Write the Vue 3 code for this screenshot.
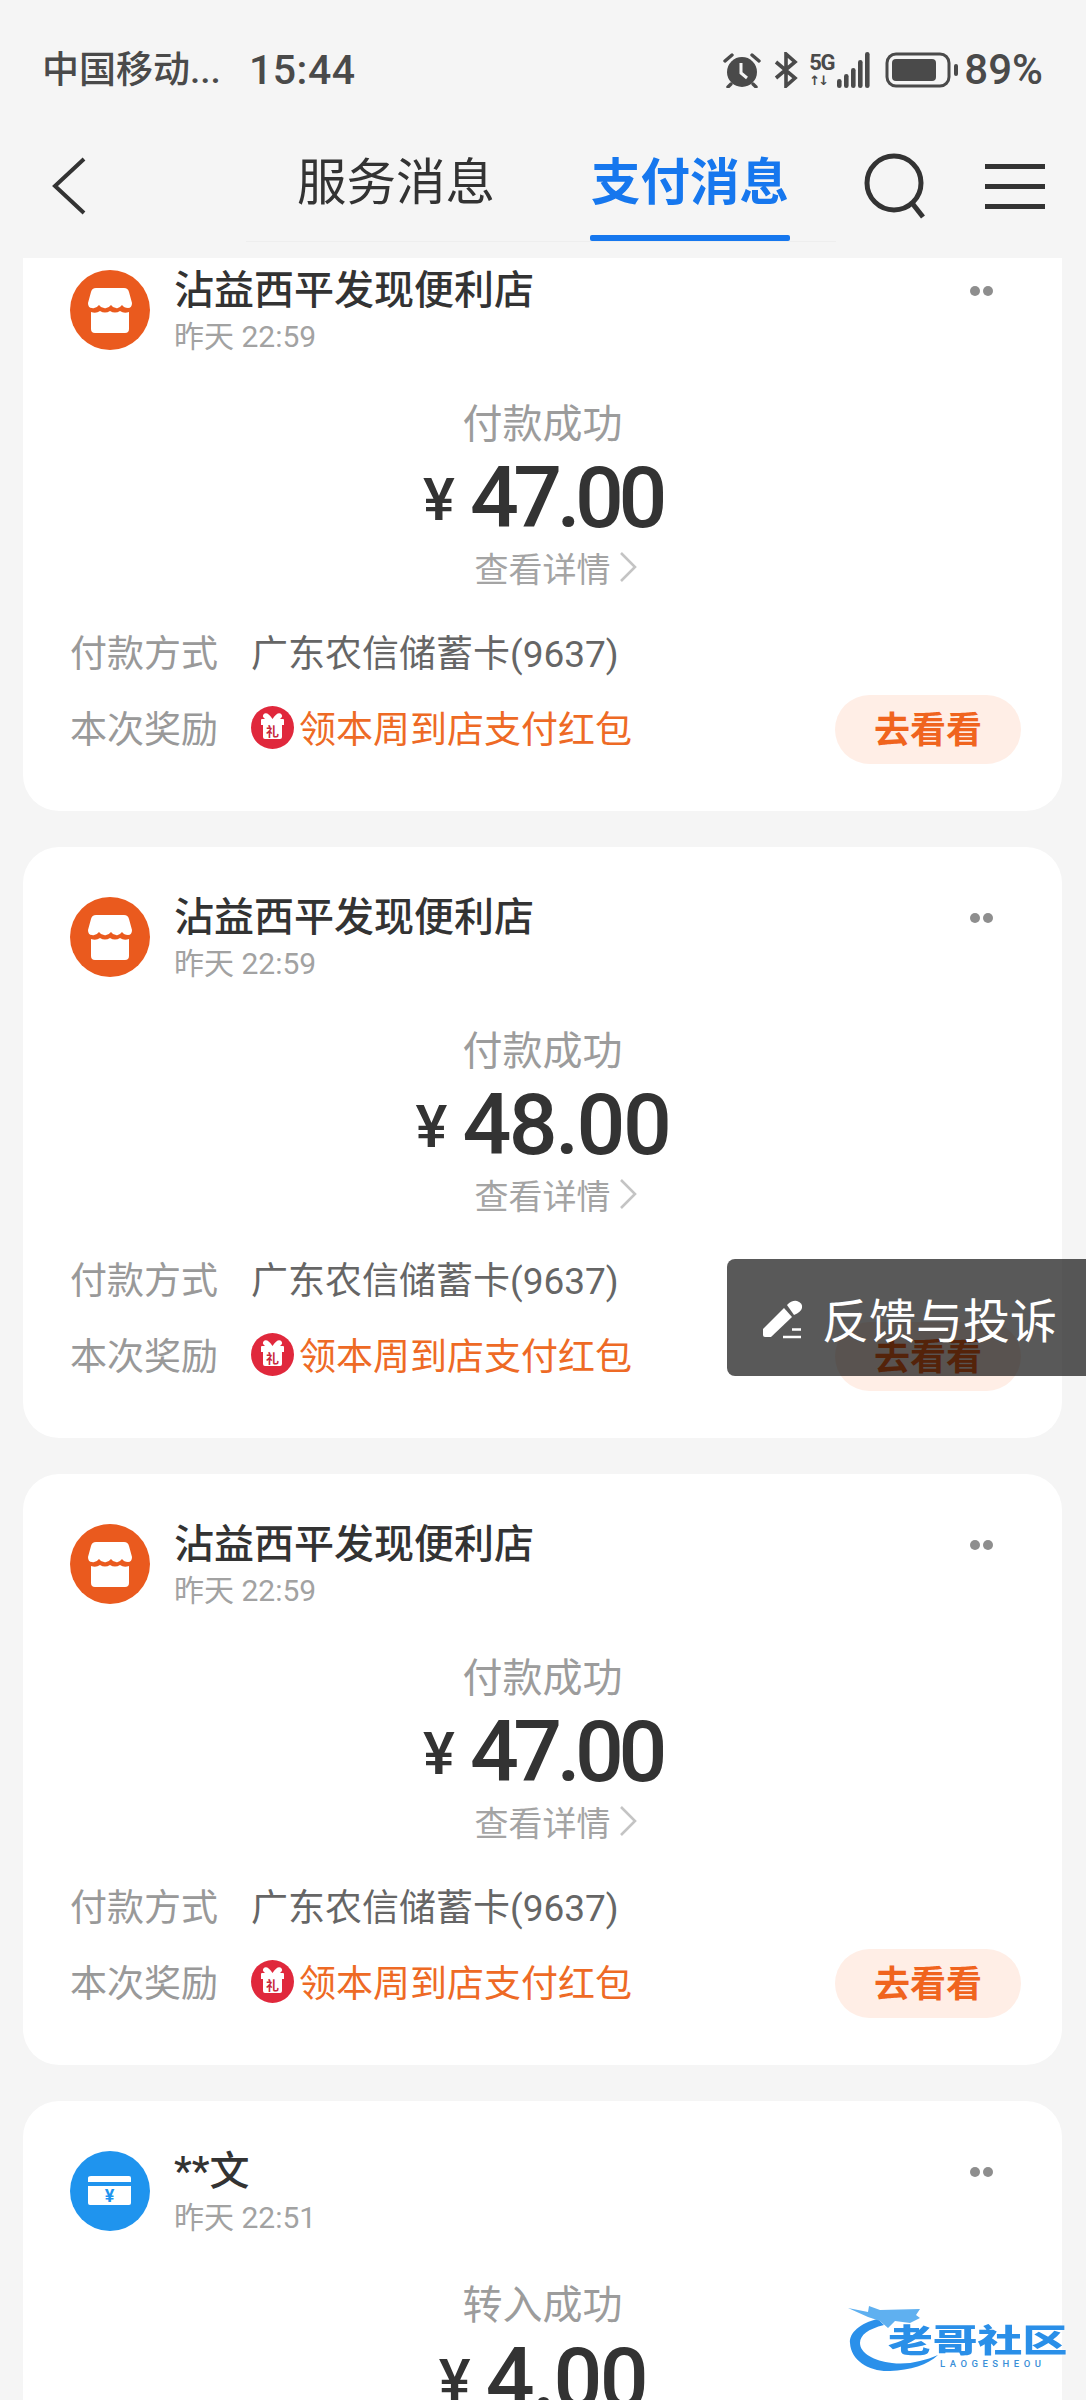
<script setup>
const cards = [
  { id: 1, type: 'shop', name: '沾益西平发现便利店', time: '昨天 22:59', status: '付款成功', amount: '47.00', track: -5.5 },
  { id: 2, type: 'shop', name: '沾益西平发现便利店', time: '昨天 22:59', status: '付款成功', amount: '48.00', track: -2.5 },
  { id: 3, type: 'shop', name: '沾益西平发现便利店', time: '昨天 22:59', status: '付款成功', amount: '47.00', track: -5.5 },
  { id: 4, type: 'bank', name: '**文', time: '昨天 22:51', status: '转入成功', amount: '4.00', track: -2.5 },
]
const bars = [
  { x: 0, h: 9 }, { x: 7, h: 14 }, { x: 14, h: 20 }, { x: 21, h: 28 }, { x: 28, h: 36 },
]
</script>

<template>
  <div class="page">
    <header class="top">
      <div class="status">
        <span class="carrier">中国移动...</span>
        <span class="clock">15:44</span>
        <div class="status-right">
          <svg class="alarm" width="38" height="36" viewBox="0 0 38 36">
            <circle cx="19" cy="20" r="15" fill="#4a4a4a" />
            <path d="M2 9 L9 3 M36 9 L29 3 M8 32 L5 35 M30 32 L33 35" stroke="#4a4a4a" stroke-width="3.4" stroke-linecap="round" />
            <path d="M18 11 V21 L24 26" fill="none" stroke="#f5f5f5" stroke-width="3" />
          </svg>
          <svg class="bt" width="26" height="36" viewBox="0 0 26 36">
            <path d="M3 10 L22 26 L13 34 V2 L22 10 L3 26" fill="none" stroke="#4a4a4a" stroke-width="3.6" />
          </svg>
          <div class="net">
            <span class="five">5G</span>
            <span class="arrows">↑↓</span>
          </div>
          <svg class="signal" width="33" height="36" viewBox="0 0 33 36">
            <rect v-for="b in bars" :key="b.x" :x="b.x" :y="36 - b.h" width="4.6" :height="b.h" rx="2.3" fill="#4a4a4a" />
          </svg>
          <svg class="battery" width="74" height="36" viewBox="0 0 74 36">
            <rect x="2" y="2" width="62" height="32" rx="9" fill="none" stroke="#4a4a4a" stroke-width="3" />
            <rect x="7" y="7" width="44" height="22" rx="4" fill="#4a4a4a" />
            <rect x="69" y="12" width="4" height="12" rx="2" fill="#4a4a4a" />
          </svg>
          <span class="pct">89%</span>
        </div>
      </div>
      <nav class="nav">
        <svg class="back" width="36" height="58" viewBox="0 0 36 58">
          <path d="M33 2 L4 29 L33 56" fill="none" stroke="#333" stroke-width="4" />
        </svg>
        <div class="tabs">
          <span class="tab">服务消息</span>
          <span class="tab active">支付消息</span>
        </div>
        <svg class="search" width="66" height="66" viewBox="0 0 66 66">
          <circle cx="31" cy="30" r="27" fill="none" stroke="#333" stroke-width="5" />
          <path d="M49 50 L60 64" stroke="#333" stroke-width="5" />
        </svg>
        <div class="menu"><i></i><i></i><i></i></div>
      </nav>
      <div class="tab-line"></div>
    </header>

    <main class="viewport">
      <div class="list">
        <article v-for="c in cards" :key="c.id" class="card">
          <div class="head">
            <svg v-if="c.type === 'shop'" class="avatar" width="80" height="80" viewBox="0 0 80 80">
              <circle cx="40" cy="40" r="40" fill="#ea5a1e" />
              <path d="M26 18 H54 Q58 18 59 22 L62 33 Q62 38 58 38 Q54 38 52 35 Q49 39 46 38 Q43 38 41 35 Q38 39 34 38 Q31 38 29 35 Q26 39 22 38 Q18 38 18 33 L21 22 Q22 18 26 18 Z" fill="#fff" />
              <path d="M21 42 Q26 44 30 41 Q35 44 40 41 Q45 44 50 41 Q54 44 59 42 V59 Q59 63 55 63 H25 Q21 63 21 59 Z" fill="#fff" />
            </svg>
            <svg v-else class="avatar" width="80" height="80" viewBox="0 0 80 80">
              <circle cx="40" cy="40" r="40" fill="#1f94ee" />
              <path d="M21 25 H59 Q61 25 61 27 V31 H18 V27 Q18 25 21 25 Z" fill="#fff" />
              <path d="M18 35 H61 V52 Q61 54 59 54 H20 Q18 54 18 52 Z" fill="#fff" />
              <text x="39.5" y="51" text-anchor="middle" font-size="18" font-weight="700" font-family="Roboto, sans-serif" fill="#1f94ee">¥</text>
            </svg>
            <div class="who">
              <div class="name">{{ c.name }}</div>
              <div class="time">{{ c.time }}</div>
            </div>
            <div class="more"><i></i><i></i></div>
          </div>

          <div class="body">
            <div class="state">{{ c.status }}</div>
            <div class="amount"><span class="yen">¥</span><span class="num" :style="{ letterSpacing: c.track + 'px' }">{{ c.amount }}</span></div>
            <div class="detail">
              查看详情
              <svg width="18" height="32" viewBox="0 0 18 32">
                <path d="M2 2 L16 16 L2 30" fill="none" stroke="#c4c4c4" stroke-width="2.6" />
              </svg>
            </div>
          </div>

          <div class="row">
            <span class="label">付款方式</span>
            <span class="value">广东农信储蓄卡(9637)</span>
          </div>
          <div class="row reward">
            <span class="label">本次奖励</span>
            <svg class="gift" width="43" height="43" viewBox="0 0 43 43">
              <circle cx="21.5" cy="21.5" r="21.5" fill="#e0283c" />
              <path d="M21.5 13 Q17 6 13.5 7.5 Q10 10 14 13 Z M21.5 13 Q26 6 29.5 7.5 Q33 10 29 13 Z" fill="#fff" />
              <path d="M11 13 H32 Q33 13 33 14 V19 H31 V31 Q31 33 29 33 H14 Q12 33 12 31 V19 H10 V14 Q10 13 11 13 Z" fill="#fff" />
              <text x="21.5" y="30" text-anchor="middle" font-size="13" font-weight="700" font-family="'Noto Sans CJK SC', sans-serif" fill="#c8283c">礼</text>
            </svg>
            <span class="promo">领本周到店支付红包</span>
            <span class="go">去看看</span>
          </div>
        </article>
      </div>
    </main>

    <div class="feedback">
      <svg width="70" height="60" viewBox="0 0 70 60">
        <path d="M13 41 L34 20 L42 29 L21 49 L15 49 Q13 49 13 47 Z" fill="#fff" />
        <path d="M37 17 Q42 12 47 13 Q53 15 52 20 Q51 24 44 27 Z" fill="#fff" />
        <path d="M42 41.5 H51 M33 49 H51" stroke="#fff" stroke-width="2.6" />
      </svg>
      <span>反馈与投诉</span>
    </div>

    <div class="mark">
      <svg class="dragon" width="240" height="90" viewBox="0 0 240 90">
        <path d="M38 24 C20 28 9 38 10 48 C11 66 30 77 50 76 C70 75 88 70 98 60 C84 66 68 70 52 68 C34 66 20 58 20 48 C20 40 28 34 44 30 Z" fill="#2a90ea" />
        <path d="M8 13 L28 17 L29 11 L40 15 L80 14 L76 20 L80 23 L70 28 L55 26 L48 33 L40 26 L28 22 Z" fill="#5fb0f0" />
      </svg>
      <span class="mark-cn">老哥社区</span>
      <span class="mark-en">LAOGESHEOU</span>
    </div>
  </div>
</template>

<style>
html, body { margin: 0; background: #f5f5f5; }
</style>

<style scoped>
.page {
  position: relative;
  width: 1086px;
  height: 2400px;
  overflow: hidden;
  background: #f5f5f5;
  font-family: Roboto, "Noto Sans CJK SC", sans-serif;
}
.top { position: relative; height: 258px; }
.status {
  height: 140px;
  display: flex;
  align-items: center;
  padding: 0 43px;
  color: #4a4a4a;
  box-sizing: border-box;
}
.carrier { font-size: 37px; font-weight: 500; width: 207px; white-space: nowrap; margin-bottom: 6px; margin-left: -1px; }
.clock { font-size: 41px; font-weight: 500; letter-spacing: .5px; }
.status-right { margin-left: auto; display: flex; align-items: center; }
.alarm { margin-right: 12px; }
.bt { margin-right: 10px; }
.net { width: 28px; display: flex; flex-direction: column; align-items: flex-start; line-height: 1; }
.five { font-size: 22px; font-weight: 700; line-height: 20px; letter-spacing: -1.5px; }
.arrows { font-size: 13px; line-height: 15px; font-weight: 700; font-family: "DejaVu Sans", sans-serif; letter-spacing: -2px; }
.signal { margin-right: 15px; }
.battery { margin-right: 5px; }
.pct { font-size: 42px; font-weight: 500; line-height: 1; }

.nav {
  position: relative;
  margin-top: 6px;
  height: 80px;
  display: flex;
  align-items: center;
  padding: 0 41px 0 51px;
}
.back { flex: none; }
.tabs {
  margin-left: 210px;
  margin-top: -6px;
  display: flex;
  gap: 96px;
  flex: none;
}
.tab { font-size: 49.5px; line-height: 60px; color: #333; white-space: nowrap; }
.tab.active { font-weight: 700; color: #1677ee; position: relative; }
.tab.active::after {
  content: "";
  position: absolute;
  left: -1px;
  right: -1px;
  top: 82px;
  height: 6px;
  border-radius: 2px;
  background: #1677ee;
}
.search { margin-left: 74px; flex: none; }
.menu { margin-left: 56px; width: 60px; display: flex; flex-direction: column; gap: 15px; flex: none; }
.menu i { display: block; height: 5px; background: #333; }
.tab-line { position: absolute; left: 246px; top: 241px; width: 590px; height: 1px; background: #eeeeee; }

.viewport { height: 2142px; overflow: hidden; }
.list {
  margin-top: -38px;
  padding: 0 24px 0 23px;
  display: flex;
  flex-direction: column;
  gap: 36px;
}
.card {
  height: 591px;
  box-sizing: border-box;
  background: #fff;
  border-radius: 36px;
  padding: 50px 41px 0 47px;
  flex: none;
}
.head { display: flex; align-items: flex-start; height: 80px; }
.avatar { flex: none; }
.who { margin-left: 24px; margin-top: -3px; }
.name { font-size: 40px; font-weight: 500; line-height: 48px; color: #333; white-space: nowrap; }
.time { font-size: 30px; line-height: 40px; margin-top: 2px; color: #a2a2a2; white-space: nowrap; }
.more { margin-left: auto; margin-right: 28px; margin-top: 16px; display: flex; gap: 3px; }
.more i { display: block; width: 10px; height: 10px; border-radius: 50%; background: #8e8e8e; }

.body { margin-left: -47px; margin-right: -41px; display: flex; flex-direction: column; align-items: center; }
.state { margin-top: 50px; font-size: 40px; line-height: 50px; color: #9c9c9c; }
.amount { margin-top: 3px; display: flex; align-items: center; height: 90px; color: #333; }
.yen { font-size: 60px; font-weight: 500; margin-right: 15px; line-height: 90px; margin-top: 4px; }
.num { font-size: 86px; font-weight: 500; line-height: 90px; }
.detail { margin-top: 1px; height: 46px; display: flex; align-items: center; font-size: 34px; color: #a4a4a4; gap: 8px; padding-left: 26px; }

.row { display: flex; align-items: center; font-size: 37px; height: 50px; margin-top: 36px; white-space: nowrap; }
.label { width: 181px; color: #999; flex: none; }
.value { color: #666; }
.reward { margin-top: 26px; }
.gift { flex: none; margin-right: 5px; }
.promo { color: #ee6a25; }
.go {
  margin-left: auto;
  margin-top: 4px;
  width: 186px;
  height: 69px;
  box-sizing: border-box;
  padding-bottom: 5px;
  border-radius: 35px;
  background: #ffeee6;
  color: #f0641e;
  font-size: 36px;
  font-weight: 700;
  display: flex;
  align-items: center;
  justify-content: center;
}

.feedback {
  position: absolute;
  left: 727px;
  top: 1259px;
  width: 359px;
  height: 117px;
  box-sizing: border-box;
  padding-left: 23px;
  border-radius: 8px 0 0 8px;
  background: rgba(0, 0, 0, .65);
  display: flex;
  align-items: center;
  gap: 2px;
  color: #fff;
  font-size: 47px;
  white-space: nowrap;
}

.mark { position: absolute; left: 840px; top: 2295px; width: 240px; height: 90px; }
.dragon { position: absolute; left: 0; top: 0; filter: blur(.6px); }
.mark-cn {
  position: absolute;
  left: 48px;
  top: 26px;
  font-size: 32px;
  line-height: 40px;
  font-weight: 900;
  color: #2a8fe8;
  white-space: nowrap;
  transform: scaleX(1.4);
  transform-origin: left center;
  text-shadow: 0 0 2px #fff;
}
.mark-en {
  position: absolute;
  left: 100px;
  top: 63px;
  font-size: 9.5px;
  line-height: 12px;
  letter-spacing: 4.5px;
  font-weight: 500;
  color: #3a8fd8;
  white-space: nowrap;
}
</style>
